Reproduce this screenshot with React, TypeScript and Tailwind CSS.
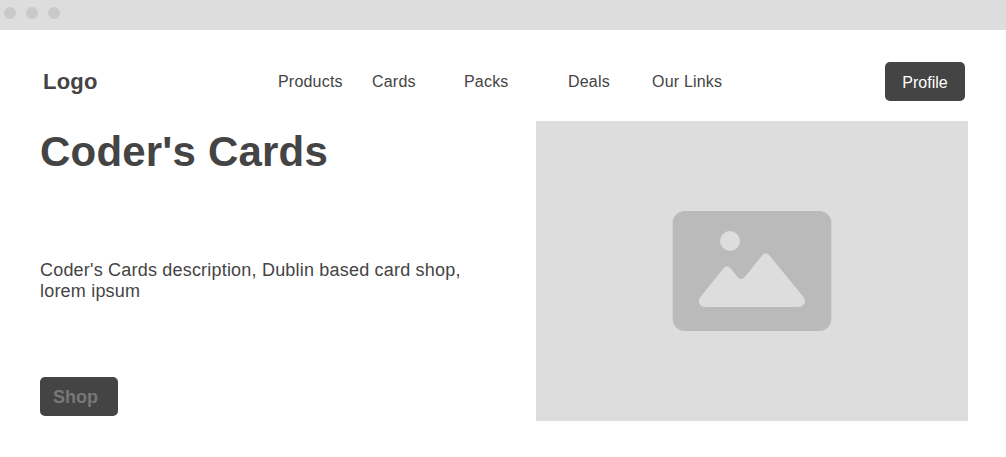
const links = [
  { label: "Products", width: "w-[94px]" },
  { label: "Cards", width: "w-[92px]" },
  { label: "Packs", width: "w-[104px]" },
  { label: "Deals", width: "w-[84px]" },
  { label: "Our Links", width: "w-[233px]" },
];

function WindowBar() {
  return (
    <div className="flex h-[30px] gap-[10px] bg-[#dddddd] pt-[7px] pl-1">
      <span className="size-3 rounded-full bg-[#c9c9c9]" />
      <span className="size-3 rounded-full bg-[#c9c9c9]" />
      <span className="size-3 rounded-full bg-[#c9c9c9]" />
    </div>
  );
}

function Header() {
  return (
    <header className="flex h-[91px] items-start pt-8 pl-[43px]">
      <div className="w-[235px] pt-[7px] text-[22px] leading-[25px] font-bold tracking-[0.2px]">Logo</div>
      <nav className="flex pt-[10px] text-base leading-[19px] tracking-[0.2px]">
        {links.map((link) => (
          <a key={link.label} href="#" className={link.width}>
            {link.label}
          </a>
        ))}
      </nav>
      <button className="h-[39px] w-20 rounded-[5px] bg-[#444444] pt-[2px] text-base text-white">Profile</button>
    </header>
  );
}

function ImagePlaceholder() {
  return (
    <div className="flex h-[300px] w-[432px] items-center justify-center bg-[#dddddd]">
      <svg width="160" height="120" viewBox="0 0 160 120">
        <rect x="0.7" width="158.6" height="120" rx="12" fill="#bababa" />
        <circle cx="58" cy="30" r="10" fill="#dddddd" />
        <path
          d="M28.2 86.3 L51.3 57.4 Q55 52.9 58.7 57.4 L65.5 66 Q69 70 72.8 66 L90.1 44.5 Q93.8 40 97.5 44.5 L131.7 86.3 C134.8 90.5 132 96 127 96 H33 C28 96 25.1 90.5 28.2 86.3 Z"
          fill="#dddddd"
        />
      </svg>
    </div>
  );
}

export default function App() {
  return (
    <div className="h-[457px] w-[1006px] overflow-hidden bg-white font-['Liberation_Sans',Arial,sans-serif] text-[#444444]">
      <WindowBar />
      <Header />
      <main className="flex pl-10">
        <section className="flex w-[496px] flex-col items-start">
          <h1 className="mt-[7px] text-[42px] leading-[48px] font-bold tracking-[0.2px]">Coder's Cards</h1>
          <p className="mt-[84px] w-[440px] text-lg leading-[21px] tracking-[0.2px]">
            Coder's Cards description, Dublin based card shop, lorem ipsum
          </p>
          <button className="mt-[75px] h-[39px] w-[78px] rounded-[5px] bg-[#444444] pr-[7px] text-lg font-bold text-[#777777]">
            Shop
          </button>
        </section>
        <ImagePlaceholder />
      </main>
    </div>
  );
}
